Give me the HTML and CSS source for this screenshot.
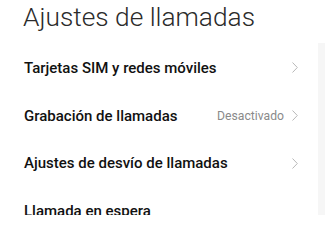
FILE: index.html
```html
<!DOCTYPE html>
<html lang="es">
<head>
<meta charset="utf-8">
<link rel="stylesheet" href="styles.css">
</head>
<body>
<div class="page">
  <main class="main">
    <h1 class="title">Ajustes de llamadas</h1>
    <ul class="list">
      <li class="row"><span class="label">Tarjetas SIM y redes móviles</span><span class="right"><svg class="chev" viewBox="0 0 6 11"><path d="M0.5 0.5 L5.3 5.5 L0.5 10.5"/></svg></span></li>
      <li class="row"><span class="label">Grabación de llamadas</span><span class="right"><span class="value">Desactivado</span><svg class="chev" viewBox="0 0 6 11"><path d="M0.5 0.5 L5.3 5.5 L0.5 10.5"/></svg></span></li>
      <li class="row"><span class="label">Ajustes de desvío de llamadas</span><span class="right"><svg class="chev" viewBox="0 0 6 11"><path d="M0.5 0.5 L5.3 5.5 L0.5 10.5"/></svg></span></li>
      <li class="row"><span class="label">Llamada en espera</span><span class="right"></span></li>
    </ul>
  </main>
  <div class="strip"></div>
</div>
</body>
</html>
```
FILE: styles.css
```css
html, body {
  margin: 0;
  padding: 0;
  background: #ffffff;
  overflow: hidden;
}
.page {
  display: flex;
  width: 325px;
  height: 215px;
}
.main {
  flex: 1;
  padding-left: 23px;
  padding-right: 20px;
}
.title {
  margin: 0;
  font-family: Roboto, "Liberation Sans", sans-serif;
  font-weight: 300;
  font-size: 26.3px;
  line-height: 34px;
  color: #2b2b2b;
}
.list {
  list-style: none;
  margin: 10px 0 0;
  padding: 0;
}
.row {
  display: flex;
  align-items: center;
  justify-content: space-between;
  height: 47.8px;
  padding-left: 1px;
}
.label {
  font-family: Roboto, "Liberation Sans", sans-serif;
  font-weight: 500;
  font-size: 15px;
  color: #111111;
}
.right {
  display: flex;
  align-items: center;
  gap: 8px;
}
.value {
  font-family: Roboto, "Liberation Sans", sans-serif;
  font-size: 12.2px;
  color: #8a8a8a;
}
.chev {
  width: 6px;
  height: 11px;
  fill: none;
  stroke: #b8b8b8;
  stroke-width: 1;
}
.strip {
  width: 7px;
  margin-top: 43px;
  background: #f6f6f6;
}
```
